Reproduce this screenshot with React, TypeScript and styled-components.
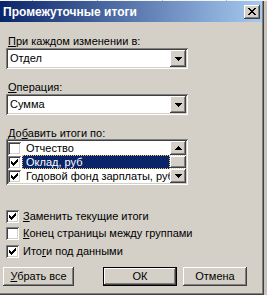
import React from "react";
import styled, { createGlobalStyle } from "styled-components";

const FACE = "#d4d0c8";
const SHADOW = "#808080";
const DARK = "#404040";
const SEL = "#0a246a";

const Global = createGlobalStyle`
  html, body { margin: 0; padding: 0; background: #fff; }
  body {
    width: 267px; height: 298px; overflow: hidden;
    font-family: "Liberation Sans", Arial, sans-serif;
    font-size: 11px; color: #000;
  }
  * { box-sizing: border-box; }
`;

const Screen = styled.div`
  width: 267px;
  height: 298px;
  display: flex;
  flex-direction: column;
  background: #fff;
`;

const TopStrip = styled.div`
  height: 1px;
  flex: none;
  background: linear-gradient(90deg, #f4f4f4 0 32px, #b8b8b8 32px 33px, #f4f4f4 33px 97px, #b8b8b8 97px 98px, #f4f4f4 98px 162px, #b8b8b8 162px 163px, #f4f4f4 163px 226px, #b8b8b8 226px 227px, #f4f4f4 227px);
`;

const Middle = styled.div`
  display: flex;
  flex: none;
`;

const OuterFrame = styled.div`
  border-right: 1px solid ${DARK};
  border-bottom: 1px solid ${DARK};
`;

const Dialog = styled.div`
  width: 263px;
  height: 293px;
  background: ${FACE};
  border-right: 1px solid ${SHADOW};
  border-bottom: 1px solid ${SHADOW};
  display: flex;
  flex-direction: column;
`;

const RightStrip = styled.div`
  width: 3px;
  background: #c8c4bc;
`;

const TitleBar = styled.div`
  height: 21px;
  flex: none;
  background: linear-gradient(90deg, #0a246a 0%, #a6caf0 100%);
  display: flex;
  align-items: center;
  justify-content: space-between;
  padding: 0 2px 0 3px;
`;

const TitleText = styled.span`
  color: #fff;
  font-weight: bold;
  font-size: 12px;
`;

const raised = `
  background: ${FACE};
  box-shadow: inset -1px -1px ${DARK}, inset 1px 1px #fff, inset -2px -2px ${SHADOW}, inset 2px 2px ${FACE};
`;

const sunken = `
  box-shadow: inset 1px 1px ${SHADOW}, inset -1px -1px #fff, inset 2px 2px ${DARK}, inset -2px -2px ${FACE};
`;

const CloseButton = styled.div`
  width: 16px;
  height: 14px;
  ${raised}
  display: flex;
  align-items: center;
  justify-content: center;
  padding-bottom: 1px;
`;

const Body = styled.div`
  flex: 1;
  display: flex;
  flex-direction: column;
  padding: 13px 0 0 6px;
`;

const Label = styled.div<{ $mt?: number }>`
  height: 13px;
  line-height: 13px;
  margin-top: ${(p) => p.$mt ?? 0}px;
  padding-left: 2px;
  white-space: nowrap;
`;

const Combo = styled.div`
  width: 182px;
  height: 21px;
  padding: 2px;
  background: #fff;
  ${sunken}
  display: flex;
  align-items: center;
`;

const ComboText = styled.span`
  flex: 1;
  padding-left: 2px;
  line-height: 17px;
`;

const ArrowButton = styled.div<{ $h?: number }>`
  width: 16px;
  height: ${(p) => p.$h ?? 17}px;
  flex: none;
  ${raised}
  display: flex;
  align-items: center;
  justify-content: center;
`;

const ListBox = styled.div`
  width: 182px;
  height: 46px;
  padding: 2px;
  background: #fff;
  ${sunken}
  display: flex;
  margin-top: -1px;
`;

const Rows = styled.div`
  flex: 1;
  min-width: 0;
  display: flex;
  flex-direction: column;
  overflow: hidden;
`;

const Row = styled.div`
  height: 14px;
  display: flex;
  align-items: center;
  white-space: nowrap;
`;

const RowText = styled.span<{ $selected?: boolean }>`
  flex: 1;
  height: 14px;
  line-height: 14px;
  margin-left: 1px;
  padding-left: 4px;
  overflow: hidden;
  background: ${(p) => (p.$selected ? SEL : "transparent")};
  color: ${(p) => (p.$selected ? "#fff" : "#000")};
  outline: ${(p) => (p.$selected ? "1px dotted #f0c860" : "none")};
  outline-offset: -1px;
`;

const ScrollBar = styled.div`
  width: 16px;
  flex: none;
  display: flex;
  flex-direction: column;
`;

const Track = styled.div`
  flex: 1;
  padding: 1px 0;
  background: repeating-conic-gradient(#fff 0 25%, ${FACE} 0 50%) 0 0 / 2px 2px;
  display: flex;
`;

const Thumb = styled.div`
  flex: 1;
  ${raised}
`;

const Box = styled.span`
  width: 13px;
  height: 13px;
  flex: none;
  background: #fff;
  ${sunken}
  display: flex;
  align-items: center;
  justify-content: center;
`;

const Checks = styled.div`
  margin-top: 25px;
  display: flex;
  flex-direction: column;
  gap: 4px;
`;

const CheckRow = styled.div<{ $mt?: number }>`
  height: 13px;
  margin-top: ${(p) => p.$mt ?? 0}px;
  display: flex;
  align-items: center;
  gap: 4px;
  white-space: nowrap;
  line-height: 13px;
`;

const ButtonRow = styled.div`
  display: flex;
  margin-top: 9px;
  margin-left: -3px;
`;

const Button = styled.div<{ $w: number; $ml?: number; $default?: boolean }>`
  width: ${(p) => p.$w}px;
  height: 19px;
  margin-left: ${(p) => p.$ml ?? 0}px;
  ${raised}
  ${(p) =>
    p.$default
      ? `box-shadow: inset 0 0 0 1px #000, inset -2px -2px ${DARK}, inset 2px 2px #fff, inset -3px -3px ${SHADOW};`
      : ""}
  display: flex;
  align-items: center;
  justify-content: center;
  line-height: 13px;
`;

const U = styled.span`
  text-decoration: underline;
  text-underline-offset: 1px;
`;

const CheckMark = () => (
  <svg width="7" height="7" viewBox="0 0 7 7" shapeRendering="crispEdges">
    <path
      fill="#000"
      d="M6 0h1v3h-1zM5 1h1v3h-1zM4 2h1v3h-1zM3 3h1v3h-1zM2 4h1v3h-1zM1 3h1v3h-1zM0 2h1v3h-1z"
    />
  </svg>
);

const Check = ({ on }: { on?: boolean }) => <Box>{on ? <CheckMark /> : null}</Box>;

const Tri = ({ up }: { up?: boolean }) => (
  <svg width="7" height="4" viewBox="0 0 7 4" shapeRendering="crispEdges">
    {up ? (
      <path fill="#000" d="M3 0h1v1h-1zM2 1h3v1h-3zM1 2h5v1h-5zM0 3h7v1h-7z" />
    ) : (
      <path fill="#000" d="M0 0h7v1h-7zM1 1h5v1h-5zM2 2h3v1h-3zM3 3h1v1h-1z" />
    )}
  </svg>
);

const CloseX = () => (
  <svg width="8" height="7" viewBox="0 0 8 7" shapeRendering="crispEdges">
    <path
      fill="#000"
      d="M0 0h2v1h-2zM6 0h2v1h-2zM1 1h2v1h-2zM5 1h2v1h-2zM2 2h4v1h-4zM3 3h2v1h-2zM2 4h4v1h-4zM1 5h2v1h-2zM5 5h2v1h-2zM0 6h2v1h-2zM6 6h2v1h-2z"
    />
  </svg>
);

export default function App() {
  return (
    <>
      <Global />
      <Screen>
        <TopStrip />
        <Middle>
          <OuterFrame>
            <Dialog>
              <TitleBar>
                <TitleText>Промежуточные итоги</TitleText>
                <CloseButton>
                  <CloseX />
                </CloseButton>
              </TitleBar>
              <Body>
                <Label>
                  <U>П</U>ри каждом изменении в:
                </Label>
                <Combo>
                  <ComboText>Отдел</ComboText>
                  <ArrowButton>
                    <Tri />
                  </ArrowButton>
                </Combo>
                <Label $mt={12}>
                  <U>О</U>перация:
                </Label>
                <Combo>
                  <ComboText>Сумма</ComboText>
                  <ArrowButton>
                    <Tri />
                  </ArrowButton>
                </Combo>
                <Label $mt={12}>
                  До<U>б</U>авить итоги по:
                </Label>
                <ListBox>
                  <Rows>
                    <Row>
                      <Check />
                      <RowText>Отчество</RowText>
                    </Row>
                    <Row>
                      <Check on />
                      <RowText $selected>Оклад, руб</RowText>
                    </Row>
                    <Row>
                      <Check on />
                      <RowText>Годовой фонд зарплаты, руб</RowText>
                    </Row>
                  </Rows>
                  <ScrollBar>
                    <ArrowButton $h={14}>
                      <Tri up />
                    </ArrowButton>
                    <Track>
                      <Thumb />
                    </Track>
                    <ArrowButton $h={14}>
                      <Tri />
                    </ArrowButton>
                  </ScrollBar>
                </ListBox>
                <Checks>
                  <CheckRow>
                    <Check on />
                    <span>
                      <U>З</U>аменить текущие итоги
                    </span>
                  </CheckRow>
                  <CheckRow>
                    <Check />
                    <span>
                      <U>К</U>онец страницы между группами
                    </span>
                  </CheckRow>
                  <CheckRow $mt={1}>
                    <Check on />
                    <span>
                      Ито<U>г</U>и под данными
                    </span>
                  </CheckRow>
                </Checks>
                <ButtonRow>
                  <Button $w={71}>
                    <span>
                      <U>У</U>брать все
                    </span>
                  </Button>
                  <Button $w={74} $ml={29} $default>
                    ОК
                  </Button>
                  <Button $w={64} $ml={6}>
                    Отмена
                  </Button>
                </ButtonRow>
              </Body>
            </Dialog>
          </OuterFrame>
          <RightStrip />
        </Middle>
      </Screen>
    </>
  );
}
